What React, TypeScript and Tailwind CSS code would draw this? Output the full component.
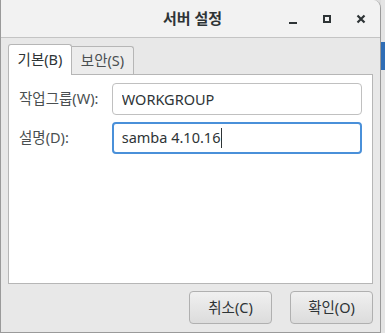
import { useState } from "react";

const font = { fontFamily: '"Noto Sans", "Noto Sans CJK KR", sans-serif' };

export default function App() {
  const [group, setGroup] = useState("WORKGROUP");

  return (
    <div className="w-[385px] h-[333px] bg-[#dcdcdc] flex overflow-hidden" style={font}>
      <div className="w-[381px] h-[333px] flex flex-col bg-[#e8e8e8] border-l border-r border-b border-[#9a9a9a] rounded-tr-[8px] overflow-hidden text-[#2e3436]">
        {/* title bar */}
        <div className="h-[38px] shrink-0 bg-[#f2f2f2] border-b border-[#c4c4c4] flex items-center relative">
          <div className="flex-1 text-center text-[15px] font-bold pl-[4px]">서버 설정</div>
          <div className="absolute right-0 top-0 h-[37px] flex items-center">
            <div className="w-[34px] flex justify-center">
              <div className="w-[8px] h-[2px] bg-[#2e3436] mt-[8px]" />
            </div>
            <div className="w-[34px] flex justify-center">
              <div className="w-[8px] h-[8px] border-2 border-[#2e3436]" />
            </div>
            <div className="w-[34px] flex justify-center mr-[2px]">
              <svg width="10" height="10" viewBox="0 0 10 10">
                <path d="M1.5 1.5 L8.5 8.5 M8.5 1.5 L1.5 8.5" stroke="#2e3436" strokeWidth="2.2" />
              </svg>
            </div>
          </div>
        </div>

        {/* tabs */}
        <div className="flex-1 flex flex-col px-[7px] pt-[6px]">
          <div className="flex items-end h-[30px] relative z-10">
            <div className="h-[31px] w-[64px] bg-white border border-b-0 border-[#b6b6b6] rounded-t-[3px] flex items-center justify-center text-[14.5px] -mb-px">
              기본(B)
            </div>
            <div className="h-[28px] w-[62px] bg-[#ececec] border border-l-0 border-b-0 border-[#b6b6b6] rounded-tr-[3px] flex items-center justify-center text-[14.5px] text-[#4a4f51]">
              보안(S)
            </div>
          </div>
          <div className="h-[210px] bg-white border border-[#b6b6b6] px-[10px] pt-[8px] flex flex-col gap-[7px]">
            <div className="flex items-center">
              <label className="w-[93px] text-[14.5px] text-[#4a4f51]">작업그룹(W):</label>
              <input
                value={group}
                onChange={(e) => setGroup(e.target.value)}
                className="w-[251px] h-[32px] border border-[#c0c0c0] rounded-[4px] px-[9px] text-[14.5px] text-[#2e3436] outline-none bg-white"
                style={font}
              />
            </div>
            <div className="flex items-center">
              <label className="w-[93px] text-[14.5px] text-[#4a4f51]">설명(D):</label>
              <div className="w-[251px] h-[32px] border-2 border-[#4a90d9] rounded-[4px] px-[8px] text-[14.5px] text-[#2e3436] bg-white flex items-center">
                <span>samba 4.10.16</span>
                <span className="inline-block w-px h-[20px] bg-[#2e3436] ml-[1px]" />
              </div>
            </div>
          </div>

          {/* buttons */}
          <div className="flex justify-end gap-[18px] mt-[7px]">
            <button className="w-[83px] h-[33px] rounded-[4px] border border-[#b0b0b0] bg-gradient-to-b from-[#f0f0f0] to-[#dcdcdc] text-[14.5px] text-[#2e3436]">
              취소(C)
            </button>
            <button className="w-[83px] h-[33px] rounded-[4px] border border-[#b0b0b0] bg-gradient-to-b from-[#f0f0f0] to-[#dcdcdc] text-[14.5px] text-[#2e3436]">
              확인(O)
            </button>
          </div>
        </div>
      </div>
      <div className="flex-1 flex flex-col">
        <div className="h-[42px] bg-[#e4e4e4]" />
        <div className="h-[28px] bg-[#2f6db5]" />
        <div className="flex-1 bg-[#e4e4e4]" />
      </div>
    </div>
  );
}
